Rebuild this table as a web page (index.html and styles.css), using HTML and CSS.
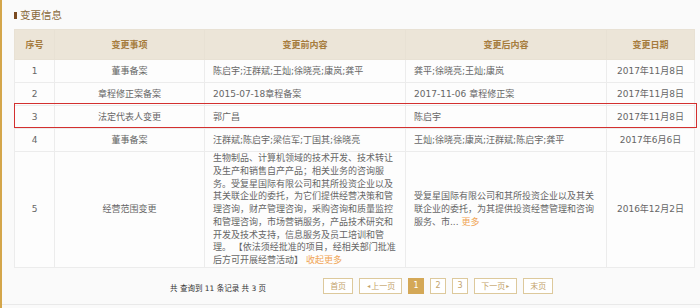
FILE: index.html
```html
<!DOCTYPE html>
<html lang="zh-CN">
<head>
<meta charset="utf-8">
<title>变更信息</title>
<link rel="stylesheet" href="styles.css">
</head>
<body>
<div class="panel">
  <h3 class="title"><span class="title-bar"></span>变更信息</h3>
  <div class="table-wrap">
    <table class="change-table">
      <colgroup>
        <col class="c-no"><col class="c-item"><col class="c-before"><col class="c-after"><col class="c-date">
      </colgroup>
      <thead>
        <tr><th>序号</th><th>变更事项</th><th>变更前内容</th><th>变更后内容</th><th>变更日期</th></tr>
      </thead>
      <tbody>
        <tr><td class="center">1</td><td class="center">董事备案</td><td>陈启宇;汪群斌;王灿;徐晓亮;康岚;龚平</td><td>龚平;徐晓亮;王灿;康岚</td><td class="center">2017年11月8日</td></tr>
        <tr><td class="center">2</td><td class="center">章程修正案备案</td><td>2015-07-18章程备案</td><td>2017-11-06 章程修正案</td><td class="center">2017年11月8日</td></tr>
        <tr><td class="center">3</td><td class="center">法定代表人变更</td><td>郭广昌</td><td>陈启宇</td><td class="center">2017年11月8日</td></tr>
        <tr><td class="center">4</td><td class="center">董事备案</td><td>汪群斌;陈启宇;梁信军;丁国其;徐晓亮</td><td>王灿;徐晓亮;康岚;汪群斌;陈启宇;龚平</td><td class="center">2017年6月6日</td></tr>
        <tr><td class="center">5</td><td class="center">经营范围变更</td><td>生物制品、计算机领域的技术开发、技术转让<br>及生产和销售自产产品；相关业务的咨询服<br>务。受复星国际有限公司和其所投资企业以及<br>其关联企业的委托，为它们提供经营决策和管<br>理咨询，财产管理咨询，采购咨询和质量监控<br>和管理咨询，市场营销服务，产品技术研究和<br>开发及技术支持，信息服务及员工培训和管<br>理。 【依法须经批准的项目，经相关部门批准<br>后方可开展经营活动】 <a class="more" href="#">收起更多</a></td><td>受复星国际有限公司和其所投资企业以及其关联企业的委托，为其提供投资经营管理和咨询服务、市...&nbsp;<a class="more" href="#">更多</a></td><td class="center">2016年12月2日</td></tr>
      </tbody>
    </table>
    <div class="highlight"></div>
  </div>
  <div class="pager">
    <span class="pager-info">共 查询到 11 条记录 共 3 页</span>
    <div class="pager-btns">
      <a class="pg" href="#">首页</a>
      <a class="pg" href="#"><span class="tri">◂</span>上一页</a>
      <a class="pg num active" href="#">1</a>
      <a class="pg num" href="#">2</a>
      <a class="pg num" href="#">3</a>
      <a class="pg" href="#">下一页<span class="tri">▸</span></a>
      <a class="pg" href="#">末页</a>
    </div>
  </div>
</div>
</body>
</html>
```
FILE: styles.css
```css
html, body {
  margin: 0;
  background: #fafafa;
  font-family: "DejaVu Sans", "Noto Sans CJK SC", sans-serif;
}

.panel {
  border-left: 2px solid #d4a64a;
  min-height: 308px;
  box-sizing: border-box;
  padding-top: 8px;
  background: #fafafa;
}

.title {
  margin: 0 0 7px 12px;
  display: flex;
  align-items: center;
  gap: 3px;
  font-size: 10.5px;
  line-height: 14px;
  font-weight: normal;
  color: #8a6a3c;
}

.title-bar {
  width: 3px;
  height: 7px;
  background: #7a4a20;
}

.table-wrap {
  position: relative;
  margin: 0 6px 0 12px;
}

.change-table {
  width: 680px;
  border-collapse: collapse;
  table-layout: fixed;
  font-size: 9px;
  color: #666;
  background: #fdfdfd;
}

.c-no { width: 40px; }
.c-item { width: 150px; }
.c-before { width: 201px; }
.c-after { width: 201px; }
.c-date { width: 88px; }

.change-table th {
  height: 29px;
  padding: 0;
  background: #ece5d8;
  color: #a67c3d;
  font-weight: bold;
  border: 1px solid #e8e1d4;
}

.change-table td {
  height: 22px;
  padding: 0 8px;
  line-height: 12.75px;
  border: 1px solid #ececec;
  vertical-align: middle;
}

.change-table td.center {
  text-align: center;
  padding: 0;
}

.more {
  color: #f0a555;
  text-decoration: none;
}

.highlight {
  position: absolute;
  left: 0;
  top: 74px;
  width: 683px;
  height: 25px;
  box-sizing: border-box;
  border: 1px solid #d3302f;
  pointer-events: none;
}

.pager {
  display: flex;
  align-items: center;
  padding: 10px 0 10px 168px;
  border-bottom: 1px solid #e9e9e9;
}

.pager-info {
  font-size: 7.5px;
  color: #333;
  margin-right: 57px;
  margin-top: 3px;
}

.pager-btns {
  display: flex;
  gap: 6px;
}

.pg {
  display: flex;
  align-items: center;
  justify-content: center;
  height: 16px;
  box-sizing: border-box;
  padding: 0 6px;
  border: 1px solid #ddc99c;
  background: #fff;
  color: #c3a36b;
  font-size: 8px;
  text-decoration: none;
}

.pg.num {
  width: 16px;
  padding: 0;
}

.pg.active {
  background: #d4a857;
  border-color: #d4a857;
  color: #fff;
}

.tri {
  font-size: 6px;
  margin: 0 1px;
}
```
